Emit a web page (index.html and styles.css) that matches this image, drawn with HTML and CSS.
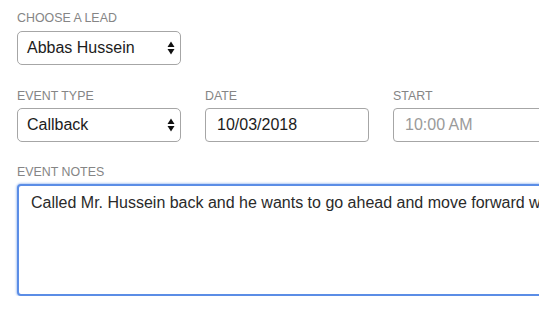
FILE: index.html
```html
<!DOCTYPE html>
<html>
<head>
<meta charset="utf-8">
<link rel="stylesheet" href="styles.css">
</head>
<body>
<form class="form">
  <div class="field field-lead">
    <label class="label">CHOOSE A LEAD</label>
    <div class="select">
      <span class="select-value">Abbas Hussein</span>
      <svg class="arrows" width="8" height="14" viewBox="0 0 8 14"><path d="M4 0.5 L7.5 6 L0.5 6 Z M0.5 8 L7.5 8 L4 13.5 Z" fill="#111"/></svg>
    </div>
  </div>
  <div class="row">
    <div class="field">
      <label class="label">EVENT TYPE</label>
      <div class="select">
        <span class="select-value">Callback</span>
        <svg class="arrows" width="8" height="14" viewBox="0 0 8 14"><path d="M4 0.5 L7.5 6 L0.5 6 Z M0.5 8 L7.5 8 L4 13.5 Z" fill="#111"/></svg>
      </div>
    </div>
    <div class="field">
      <label class="label">DATE</label>
      <input class="input" type="text" value="10/03/2018">
    </div>
    <div class="field">
      <label class="label">START</label>
      <input class="input" type="text" placeholder="10:00 AM">
    </div>
  </div>
  <div class="field field-notes">
    <label class="label">EVENT NOTES</label>
    <textarea class="notes">Called Mr. Hussein back and he wants to go ahead and move forward with the purchase.</textarea>
  </div>
</form>
</body>
</html>
```

FILE: styles.css
```css
html, body {
  margin: 0;
  padding: 0;
  overflow: hidden;
  background: #fff;
}
body {
  font-family: "Liberation Sans", Arial, sans-serif;
  color: #222;
}
.form {
  padding: 10px 0 0 17px;
  display: flex;
  flex-direction: column;
}
.field {
  display: flex;
  flex-direction: column;
}
.field-lead {
  margin-bottom: 23px;
}
.label {
  font-size: 12.4px;
  line-height: 16px;
  color: #858585;
  margin-bottom: 4.5px;
}
.field-notes .label {
  margin-bottom: 4px;
}
.row {
  display: flex;
  gap: 24px;
  margin-bottom: 22px;
}
.row .field {
  width: 164px;
  flex: none;
}
.select {
  width: 164px;
  height: 34px;
  box-sizing: border-box;
  border: 1px solid #a6a6a6;
  border-radius: 5px;
  background: #fff;
  display: flex;
  align-items: center;
  padding: 0 0 0 9px;
}
.select-value {
  font-size: 16px;
  line-height: 32px;
  color: #1c1c1c;
  flex: 1;
}
.arrows {
  margin-right: 5px;
}
.input {
  width: 164px;
  height: 34px;
  box-sizing: border-box;
  border: 1px solid #a6a6a6;
  border-radius: 4px;
  padding: 0 0 0 11px;
  margin: 0;
  font-family: "Liberation Sans", Arial, sans-serif;
  font-size: 16px;
  color: #1c1c1c;
  background: #fff;
  outline: none;
}
.input::placeholder {
  color: #9a9a9a;
}
.notes {
  width: 1000px;
  height: 112px;
  box-sizing: border-box;
  margin: 0;
  border: 2px solid #5b8de6;
  border-radius: 4px;
  box-shadow: 0 0 2px 1px rgba(91, 141, 230, 0.45);
  padding: 7px 12px;
  font-family: "Liberation Sans", Arial, sans-serif;
  font-size: 16px;
  line-height: 20px;
  color: #2a2a2a;
  resize: none;
  outline: none;
  white-space: nowrap;
  overflow: hidden;
}
```
